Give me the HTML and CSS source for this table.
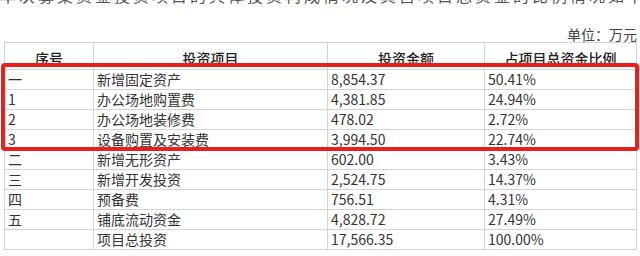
FILE: index.html
```html
<!DOCTYPE html>
<html lang="zh">
<head>
<meta charset="utf-8">
<link rel="stylesheet" href="styles.css">
</head>
<body>
<div class="page">
  <div class="cut"><p class="cut-line">本次募集资金投资项目的具体投资构成情况及其占项目总资金的比例情况如下表所示：项目总投</p></div>
  <div class="unit">单位：万元</div>
  <div class="wrap">
    <table class="tbl">
      <colgroup>
        <col class="c1"><col class="c2"><col class="c3"><col class="c4">
      </colgroup>
      <thead>
        <tr class="head"><th>序号</th><th>投资项目</th><th>投资金额</th><th>占项目总资金比例</th></tr>
      </thead>
      <tbody>
        <tr><td>一</td><td>新增固定资产</td><td>8,854.37</td><td>50.41%</td></tr>
        <tr><td>1</td><td>办公场地购置费</td><td>4,381.85</td><td>24.94%</td></tr>
        <tr><td>2</td><td>办公场地装修费</td><td>478.02</td><td>2.72%</td></tr>
        <tr><td>3</td><td>设备购置及安装费</td><td>3,994.50</td><td>22.74%</td></tr>
        <tr><td>二</td><td>新增无形资产</td><td>602.00</td><td>3.43%</td></tr>
        <tr><td>三</td><td>新增开发投资</td><td>2,524.75</td><td>14.37%</td></tr>
        <tr><td>四</td><td>预备费</td><td>756.51</td><td>4.31%</td></tr>
        <tr><td>五</td><td>铺底流动资金</td><td>4,828.72</td><td>27.49%</td></tr>
        <tr><td></td><td>项目总投资</td><td>17,566.35</td><td>100.00%</td></tr>
      </tbody>
    </table>
    <div class="highlight"></div>
  </div>
</div>
</body>
</html>
```
FILE: styles.css
```css
html, body {
  margin: 0;
  padding: 0;
  background: #ffffff;
}
.page {
  width: 640px;
  height: 256px;
  overflow: hidden;
  font-family: "Noto Sans CJK SC", "Noto Sans", sans-serif;
  color: #333333;
}
.cut {
  height: 4px;
  overflow: hidden;
}
.cut-line {
  margin: -16px 0 0 0;
  font-size: 16px;
  line-height: 22px;
  color: #555;
  white-space: nowrap;
  letter-spacing: 3px;
}
.unit {
  margin-top: 22px;
  height: 16px;
  font-size: 14px;
  line-height: 16px;
  text-align: right;
  padding-right: 3px;
  color: #444;
}
.wrap {
  position: relative;
  margin-top: 0;
  margin-left: 4px;
  width: 632px;
}
.tbl {
  border-collapse: collapse;
  table-layout: fixed;
  width: 632px;
  font-size: 14px;
}
.c1 { width: 89px; }
.c2 { width: 234px; }
.c3 { width: 157px; }
.c4 { width: 152px; }
.tbl th, .tbl td {
  border: 1px solid #d4d4d4;
  padding: 0 3px;
  white-space: nowrap;
  overflow: hidden;
}
.tbl th {
  height: 20px;
  font-weight: 500;
  color: #222;
  text-align: center;
  line-height: 18px;
  padding-top: 6px;
  vertical-align: top;
}
.tbl td {
  height: 19px;
  line-height: 19px;
  text-align: left;
  vertical-align: middle;
}
.highlight {
  position: absolute;
  left: -3px;
  top: 21px;
  width: 630px;
  height: 80px;
  border: 4px solid #ea1f1c;
  border-radius: 4px;
}
```
